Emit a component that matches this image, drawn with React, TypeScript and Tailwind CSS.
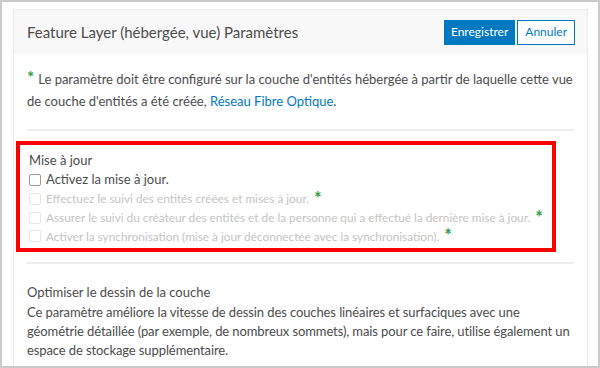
export default function App() {
  const Star = () => <span className="text-[#2f9e44] text-[18px] font-bold ml-[5px] relative -top-[1px] leading-none">*</span>;
  const Box = ({ on }: { on?: boolean }) => (
    <span className={`inline-block w-[12px] h-[12px] rounded-[2px] border mr-[5px] shrink-0 ${on ? "border-[#9a9a9a]" : "border-[#e6e6e6]"}`} />
  );
  return (
    <div className="w-[600px] h-[368px] overflow-hidden bg-white border-2 border-[#cacaca] pl-[11px] pr-[10px] pt-[7px]" style={{ fontFamily: "Lato, 'Open Sans', sans-serif" }}>
      <div className="h-[400px] border border-[#ececec] border-b-0">
        <div className="h-[44px] bg-[#f8f8f8] flex items-center justify-between pl-[13px] pr-[12px]">
          <h1 className="text-[15px] text-[#4c4c4c]">Feature Layer (hébergée, vue) Paramètres</h1>
          <div className="flex gap-[2px]">
            <button className="h-[25px] px-[6px] bg-[#0079c1] text-white text-[12px] border border-[#0079c1]">Enregistrer</button>
            <button className="h-[25px] px-[7px] bg-white text-[#0079c1] text-[12px] border border-[#0079c1]">Annuler</button>
          </div>
        </div>
        <div className="px-[13px] pt-[14px] text-[13px] text-[#4c4c4c] leading-[22px]">
          <p>
            <span className="text-[#2f9e44] text-[17px] font-bold mr-[4px] leading-none">*</span>Le paramètre doit être configuré sur la couche d'entités hébergée à partir de laquelle cette vue de couche d'entités a été créée, <span className="text-[#0079c1]">Réseau Fibre Optique</span>.
          </p>
          <div className="h-[2px] bg-[#ededed] mt-[17px]" />
        </div>
        <div className="ml-[2px] mt-[10px] w-[540px] h-[111px] border-4 border-[#ff0000] pl-[9px] pt-[6px] text-[13px] leading-[19px]">
          <div className="text-[#4c4c4c]">Mise à jour</div>
          <div className="flex items-center text-[#4c4c4c] h-[19px]"><Box on />Activez la mise à jour.</div>
          <div className="flex items-center text-[#c4c4c4] text-[11.8px] h-[19px]"><Box />Effectuez le suivi des entités créées et mises à jour.<Star /></div>
          <div className="flex items-center text-[#c4c4c4] text-[11.8px] h-[19px]"><Box />Assurer le suivi du créateur des entités et de la personne qui a effectué la dernière mise à jour.<Star /></div>
          <div className="flex items-center text-[#c4c4c4] text-[11.8px] h-[18px]"><Box />Activer la synchronisation (mise à jour déconnectée avec la synchronisation).<Star /></div>
        </div>
        <div className="pl-[13px] pr-[10px] text-[13px] text-[#4c4c4c]">
          <div className="h-[2px] bg-[#ededed] mt-[10px] mr-[3px]" />
          <div className="mt-[18px] leading-[20px]">Optimiser le dessin de la couche</div>
          <p className="mt-[1px] leading-[19px] tracking-[-0.1px]">Ce paramètre améliore la vitesse de dessin des couches linéaires et surfaciques avec une géométrie détaillée (par exemple, de nombreux sommets), mais pour ce faire, utilise également un espace de stockage supplémentaire.</p>
        </div>
      </div>
    </div>
  );
}
